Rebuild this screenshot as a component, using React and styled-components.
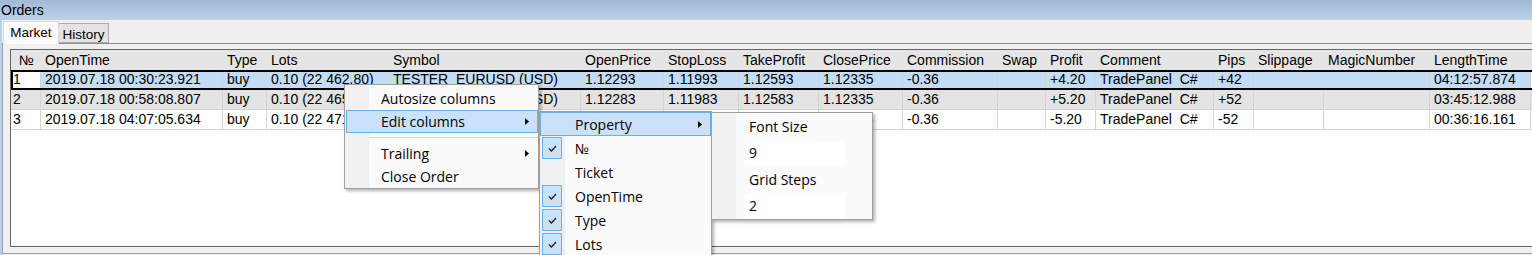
import React from 'react';
import styled, { createGlobalStyle } from 'styled-components';

const GlobalStyle = createGlobalStyle`
  html, body { margin: 0; padding: 0; background: #f0f0f0; }
  body { width: 1532px; height: 255px; overflow: hidden; }
  #root { width: 1532px; height: 255px; }
`;

const columns = [
  { key: 'n', title: '№', w: 30, hpad: 8, pad: 2 },
  { key: 'time', title: 'OpenTime', w: 182 },
  { key: 'type', title: 'Type', w: 44 },
  { key: 'lots', title: 'Lots', w: 122 },
  { key: 'symbol', title: 'Symbol', w: 192 },
  { key: 'open', title: 'OpenPrice', w: 83 },
  { key: 'sl', title: 'StopLoss', w: 75 },
  { key: 'tp', title: 'TakeProfit', w: 80 },
  { key: 'close', title: 'ClosePrice', w: 84 },
  { key: 'comm', title: 'Commission', w: 95 },
  { key: 'swap', title: 'Swap', w: 48 },
  { key: 'profit', title: 'Profit', w: 50 },
  { key: 'comment', title: 'Comment', w: 118 },
  { key: 'pips', title: 'Pips', w: 40 },
  { key: 'slip', title: 'Slippage', w: 70 },
  { key: 'magic', title: 'MagicNumber', w: 106 },
  { key: 'len', title: 'LengthTime', w: 101 },
];

const template = columns.map((c) => `${c.w}px`).join(' ');

const rows = [
  {
    n: '1', time: '2019.07.18 00:30:23.921', type: 'buy', lots: '0.10 (22 462.80)',
    symbol: 'TESTER_EURUSD (USD)', open: '1.12293', sl: '1.11993', tp: '1.12593', close: '1.12335',
    comm: '-0.36', swap: '', profit: '+4.20', comment: 'TradePanel  C#', pips: '+42', slip: '', magic: '',
    len: '04:12:57.874', selected: true,
  },
  {
    n: '2', time: '2019.07.18 00:58:08.807', type: 'buy', lots: '0.10 (22 465.60)',
    symbol: 'TESTER_EURUSD (USD)', open: '1.12283', sl: '1.11983', tp: '1.12583', close: '1.12335',
    comm: '-0.36', swap: '', profit: '+5.20', comment: 'TradePanel  C#', pips: '+52', slip: '', magic: '',
    len: '03:45:12.988', alt: true,
  },
  {
    n: '3', time: '2019.07.18 04:07:05.634', type: 'buy', lots: '0.10 (22 471.20)',
    symbol: 'TESTER_EURUSD (USD)', open: '1.12273', sl: '1.11973', tp: '1.12573', close: '1.12335',
    comm: '-0.36', swap: '', profit: '-5.20', comment: 'TradePanel  C#', pips: '-52', slip: '', magic: '',
    len: '00:36:16.161',
  },
];

/* ---------- window chrome ---------- */

const Window = styled.div`
  position: relative;
  width: 1532px;
  height: 255px;
  overflow: hidden;
  background: #f0f0f0;
  display: flex;
  flex-direction: column;
  font-family: "Liberation Sans", Arial, sans-serif;
  color: #000;
`;

const TitleBar = styled.div`
  flex: none;
  height: 20px;
  padding-left: 1px;
  background: linear-gradient(#9fb9d6, #bcd2e9);
  font-size: 14px;
  line-height: 20px;
`;

const Body = styled.div`
  flex: none;
  height: 235px;
  display: flex;
  flex-direction: column;
  border-left: 2px solid #b9d1ea;
`;

const TabStrip = styled.div`
  flex: none;
  height: 23px;
  display: flex;
  align-items: flex-end;
  padding-left: 1px;
  position: relative;
  z-index: 1;
`;

const Tab = styled.div`
  box-sizing: border-box;
  font-size: 13.5px;
  display: flex;
  align-items: center;
  justify-content: center;
  border: 1px solid ${(p) => (p.$active ? '#d9d9d9' : '#acacac')};
  ${(p) =>
    p.$active
      ? `
    width: 56px;
    height: 23px;
    margin-bottom: -1px;
    border-bottom: none;
    background: #fcfcfc;
    padding-bottom: 1px;
  `
      : `
    width: 50px;
    height: 20px;
    border-left: none;
    background: #e3e3e3;
    padding-top: 2px;
  `}
`;

const TabPanel = styled.div`
  flex: none;
  box-sizing: border-box;
  height: 211px;
  margin-right: -12px;
  border: 1px solid #a0a0a0;
  border-top-color: #8c8c8c;
  padding: 5px 0 6px 7px;
  display: flex;
`;

/* ---------- grid ---------- */

const Grid = styled.div`
  flex: 1;
  background: #fff;
  border: 1px solid #646464;
  border-right: none;
  font-size: 14px;
`;

const HeaderRow = styled.div`
  display: grid;
  grid-template-columns: ${template};
  height: 20px;
  background: #e5e5e5;
`;

const HeaderCell = styled.div`
  padding-left: ${(p) => p.$pad}px;
  line-height: 20px;
  white-space: nowrap;
  overflow: hidden;
`;

const Row = styled.div`
  display: grid;
  grid-template-columns: ${template};
  height: 20px;
  background: ${(p) => (p.$alt ? '#e3e3e3' : '#fff')};
  ${(p) => (p.$selected ? 'outline: 2px solid #000; outline-offset: -2px;' : '')}
`;

const Cell = styled.div`
  box-sizing: border-box;
  padding-left: ${(p) => p.$pad}px;
  line-height: 19px;
  white-space: pre;
  overflow: hidden;
  border-right: 1px solid #d4d4d4;
  border-bottom: 1px solid #d4d4d4;
  background: ${(p) => (p.$hl ? '#c3ddf6' : 'transparent')};
`;

/* ---------- menus ---------- */

const Menu = styled.div`
  position: absolute;
  left: ${(p) => p.$left}px;
  top: ${(p) => p.$top}px;
  width: ${(p) => p.$width}px;
  box-sizing: border-box;
  border: 1px solid #a0a0a0;
  padding: ${(p) => p.$pad};
  background: linear-gradient(to right, #f1f1f1 0 ${(p) => p.$gutter}px, #fbfbfb ${(p) => p.$gutter}px);
  box-shadow: 2px 2px 3px rgba(0, 0, 0, 0.3);
  font-family: "Open Sans", "Noto Sans", sans-serif;
  font-size: 14px;
  color: #000;
  z-index: 5;
`;

const MenuItem = styled.div`
  box-sizing: border-box;
  height: ${(p) => p.$h}px;
  display: flex;
  align-items: center;
  padding-left: ${(p) => p.$indent}px;
  padding-right: ${(p) => p.$right || 0}px;
  border: 1px solid ${(p) => (p.$hot ? '#6aaeea' : 'transparent')};
  background: ${(p) => (p.$hot ? '#c9e2fa' : 'transparent')};
  white-space: nowrap;
`;

const Label = styled.span`
  flex: 1;
`;

const Separator = styled.div`
  height: 1px;
  margin: 4px 0 4px 23px;
  background: #d2d2d2;
`;

const CheckBox = styled.span`
  flex: none;
  box-sizing: border-box;
  width: 20px;
  height: 22px;
  margin-right: 13px;
  display: flex;
  align-items: center;
  justify-content: center;
  border: 1px solid ${(p) => (p.$on ? '#6aaeea' : 'transparent')};
  background: ${(p) => (p.$on ? '#c9e2fa' : 'transparent')};
`;

const ValueBox = styled.div`
  box-sizing: border-box;
  width: 100px;
  height: 100%;
  margin-left: -4px;
  padding-left: 4px;
  background: #fff;
  display: flex;
  align-items: center;
`;

const Arrow = () => (
  <svg width="4" height="7" viewBox="0 0 4 7">
    <polygon points="0,0 4,3.5 0,7" fill="#000" />
  </svg>
);

const Check = () => (
  <svg width="9" height="7" viewBox="0 0 9 7">
    <polyline points="1,3.5 3.5,6 8,1" fill="none" stroke="#222" strokeWidth="1.3" />
  </svg>
);

const columnItems = [
  { label: '№', on: true },
  { label: 'Ticket', on: false },
  { label: 'OpenTime', on: true },
  { label: 'Type', on: true },
  { label: 'Lots', on: true },
  { label: 'Symbol', on: true },
];

export default function App() {
  return (
    <>
      <GlobalStyle />
      <Window>
        <TitleBar>Orders</TitleBar>
        <Body>
          <TabStrip>
            <Tab $active>Market</Tab>
            <Tab>History</Tab>
          </TabStrip>
          <TabPanel>
            <Grid>
              <HeaderRow>
                {columns.map((c) => (
                  <HeaderCell key={c.key} $pad={c.hpad ?? 4}>
                    {c.title}
                  </HeaderCell>
                ))}
              </HeaderRow>
              {rows.map((r) => (
                <Row key={r.n} $alt={r.alt} $selected={r.selected}>
                  {columns.map((c) => (
                    <Cell key={c.key} $pad={c.pad ?? 4} $hl={r.selected && c.key !== 'n'}>
                      {r[c.key]}
                    </Cell>
                  ))}
                </Row>
              ))}
            </Grid>
          </TabPanel>
        </Body>

        <Menu $left={344} $top={84} $width={195} $pad="2px 0 0 1px" $gutter={24}>
          <MenuItem $h={23} $indent={34}>
            <Label>Autosize columns</Label>
          </MenuItem>
          <MenuItem $h={23} $indent={34} $right={8} $hot>
            <Label>Edit columns</Label>
            <Arrow />
          </MenuItem>
          <Separator />
          <MenuItem $h={23} $indent={34} $right={8}>
            <Label>Trailing</Label>
            <Arrow />
          </MenuItem>
          <MenuItem $h={23} $indent={34}>
            <Label>Close Order</Label>
          </MenuItem>
        </Menu>

        <Menu $left={539} $top={111} $width={173} $pad="0" $gutter={25}>
          <MenuItem $h={24} $indent={34} $right={8} $hot>
            <Label>Property</Label>
            <Arrow />
          </MenuItem>
          {columnItems.map((it) => (
            <MenuItem key={it.label} $h={24} $indent={1}>
              <CheckBox $on={it.on}>{it.on && <Check />}</CheckBox>
              <Label>{it.label}</Label>
            </MenuItem>
          ))}
        </Menu>

        <Menu $left={711} $top={112} $width={162} $pad="0" $gutter={24}>
          <MenuItem $h={26.5} $indent={36}>
            <Label>Font Size</Label>
          </MenuItem>
          <MenuItem $h={26.5} $indent={36}>
            <ValueBox>9</ValueBox>
          </MenuItem>
          <MenuItem $h={26.5} $indent={36}>
            <Label>Grid Steps</Label>
          </MenuItem>
          <MenuItem $h={26.5} $indent={36}>
            <ValueBox>2</ValueBox>
          </MenuItem>
        </Menu>
      </Window>
    </>
  );
}
